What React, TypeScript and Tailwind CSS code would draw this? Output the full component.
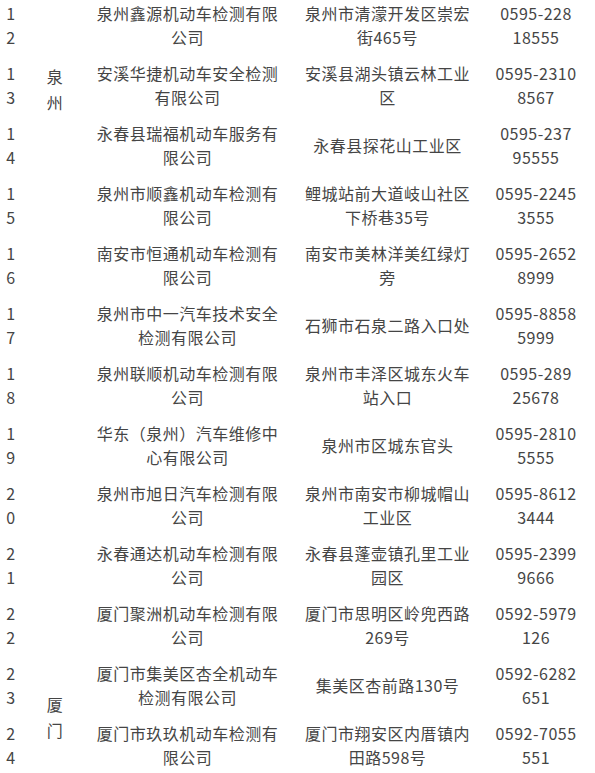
const rows: { no: string; company: string[]; address: string[]; phone: string[] }[] = [
  { no: '12', company: ['泉州鑫源机动车检测有限', '公司'], address: ['泉州市清濛开发区崇宏', '街465号'], phone: ['0595-228', '18555'] },
  { no: '13', company: ['安溪华捷机动车安全检测', '有限公司'], address: ['安溪县湖头镇云林工业', '区'], phone: ['0595-2310', '8567'] },
  { no: '14', company: ['永春县瑞福机动车服务有', '限公司'], address: ['永春县探花山工业区'], phone: ['0595-237', '95555'] },
  { no: '15', company: ['泉州市顺鑫机动车检测有', '限公司'], address: ['鲤城站前大道岐山社区', '下桥巷35号'], phone: ['0595-2245', '3555'] },
  { no: '16', company: ['南安市恒通机动车检测有', '限公司'], address: ['南安市美林洋美红绿灯', '旁'], phone: ['0595-2652', '8999'] },
  { no: '17', company: ['泉州市中一汽车技术安全', '检测有限公司'], address: ['石狮市石泉二路入口处'], phone: ['0595-8858', '5999'] },
  { no: '18', company: ['泉州联顺机动车检测有限', '公司'], address: ['泉州市丰泽区城东火车', '站入口'], phone: ['0595-289', '25678'] },
  { no: '19', company: ['华东（泉州）汽车维修中', '心有限公司'], address: ['泉州市区城东官头'], phone: ['0595-2810', '5555'] },
  { no: '20', company: ['泉州市旭日汽车检测有限', '公司'], address: ['泉州市南安市柳城帽山', '工业区'], phone: ['0595-8612', '3444'] },
  { no: '21', company: ['永春通达机动车检测有限', '公司'], address: ['永春县蓬壶镇孔里工业', '园区'], phone: ['0595-2399', '9666'] },
  { no: '22', company: ['厦门聚洲机动车检测有限', '公司'], address: ['厦门市思明区岭兜西路', '269号'], phone: ['0592-5979', '126'] },
  { no: '23', company: ['厦门市集美区杏全机动车', '检测有限公司'], address: ['集美区杏前路130号'], phone: ['0592-6282', '651'] },
  { no: '24', company: ['厦门市玖玖机动车检测有', '限公司'], address: ['厦门市翔安区内厝镇内', '田路598号'], phone: ['0592-7055', '551'] },
];

function Cell({ lines, className = '' }: { lines: string[]; className?: string }) {
  return (
    <div className={`flex flex-col items-center justify-center leading-[24px] whitespace-nowrap ${className}`}>
      {lines.map((l, i) => (
        <span key={i}>{l}</span>
      ))}
    </div>
  );
}

export default function App() {
  return (
    <div
      className="h-[773px] w-[595px] overflow-hidden bg-white text-[16px] tracking-[0.5px] text-[#454545]"
      style={{ fontFamily: '"Noto Sans CJK SC", "Noto Sans", sans-serif' }}
    >
      <div className="-mt-[5px] grid grid-cols-[22px_66px_199px_201px_96px] auto-rows-[60px]">
        <div className="col-start-2 row-start-1 row-span-10 flex flex-col items-center pt-[68px] leading-[26px]">
          <span>泉</span>
          <span>州</span>
        </div>
        <div className="col-start-2 row-start-11 row-span-3 flex flex-col items-center pt-[96px] leading-[26px]">
          <span>厦</span>
          <span>门</span>
        </div>
        {rows.map((r, i) => (
          <div key={r.no} className="contents">
            <Cell lines={[r.no[0], r.no[1]]} className="col-start-1" />
            <Cell lines={r.company} className="col-start-3" />
            <Cell lines={r.address} className="col-start-4" />
            <Cell lines={r.phone} className="col-start-5" />
          </div>
        ))}
      </div>
    </div>
  );
}
